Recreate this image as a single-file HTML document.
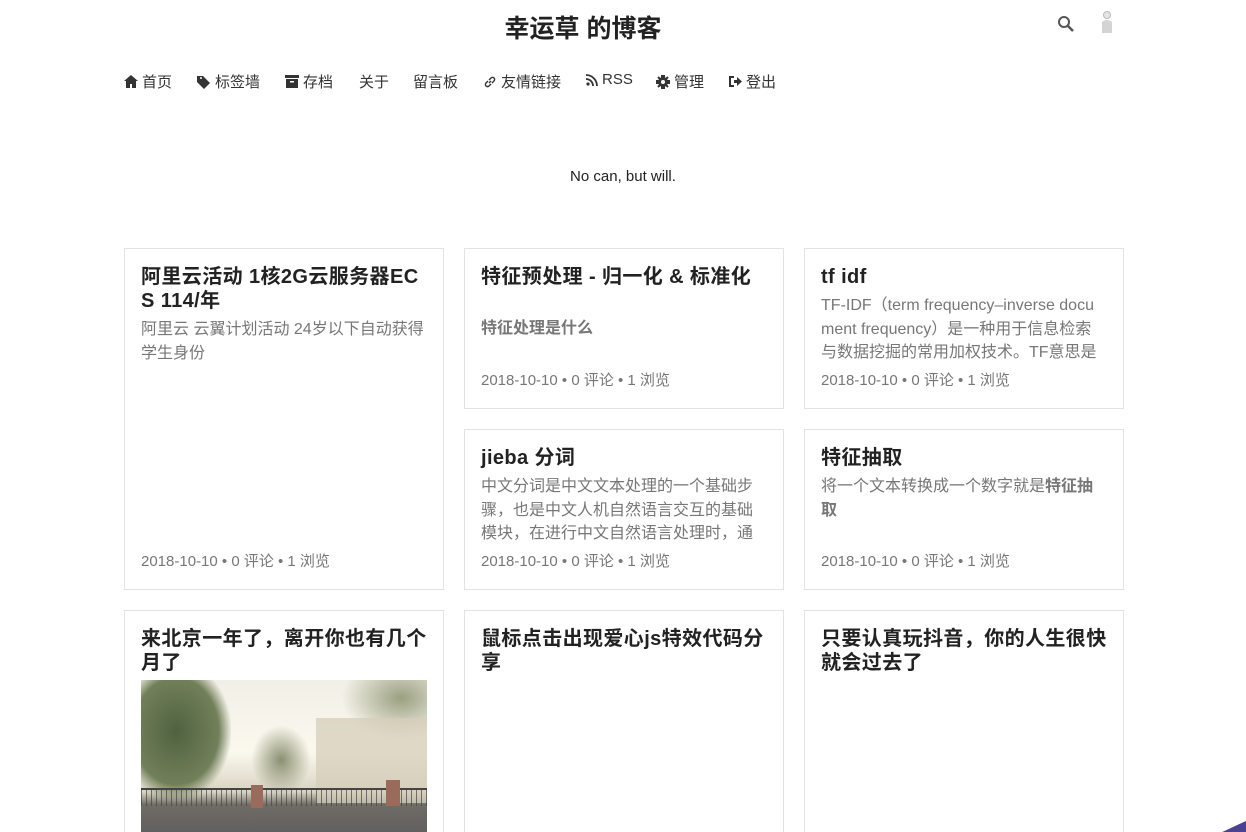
<!DOCTYPE html>
<html><head><meta charset="utf-8"><style>
*{margin:0;padding:0;box-sizing:border-box}
html,body{width:1246px;height:832px;overflow:hidden}
body{background:#fff;font-family:"Liberation Sans","Noto Sans CJK SC",sans-serif;color:#222;position:relative}
.brand{position:absolute;top:9px;left:0;width:1166px;text-align:center;font-size:25px;font-weight:bold;color:#222}
.nav span{position:absolute;top:71px;font-size:15px;color:#333;display:flex;align-items:center;gap:4px;white-space:nowrap}
.nav svg{fill:#333}
.motto{position:absolute;top:168px;width:1246px;text-align:center;font-size:15px;color:#222}
.card{position:absolute;border:1px solid #e3e3e3;background:#fff;padding:16px 16px;width:320px;overflow:hidden}
.card h2{font-size:20px;line-height:24px;font-weight:bold;color:#222;word-break:break-all;letter-spacing:.4px}
.card p{font-size:16px;line-height:23.5px;color:#777;margin-top:5px;word-break:break-all;letter-spacing:0}
.meta{position:absolute;left:16px;bottom:18px;font-size:15px;color:#777}
</style></head><body>
<div class="brand">幸运草 的博客</div>
<svg style="position:absolute;left:1057px;top:15px" width="18" height="18" viewBox="0 0 18 18"><circle cx="7" cy="7" r="5" stroke="#555" stroke-width="2" fill="none"/><path d="M11 11l5 5" stroke="#555" stroke-width="2.5"/></svg>
<svg style="position:absolute;left:1099px;top:10px" width="16" height="26" viewBox="0 0 16 26"><circle cx="8" cy="5" r="3.5" fill="#e4e4e4" stroke="#bbb"/><path d="M3 12q5-4 10 0v11H3z" fill="#d4d4d4"/></svg>
<div class="nav">
<span style="left:124px"><svg width="14" height="13" viewBox="0 0 14 13"><path d="M7 0L0 6h2v7h4V9h2v4h4V6h2z"/></svg>首页</span>
<span style="left:197px"><svg width="14" height="14" viewBox="0 0 14 14"><path d="M0 1v6l7 7 6-6-7-7zM3 3a1 1 0 1 1 0 .1z"/></svg>标签墙</span>
<span style="left:285px"><svg width="14" height="13" viewBox="0 0 14 13"><path d="M0 0h14v3H0zM1 4h12v9H1z"/><rect x="5" y="6" width="4" height="1.5" fill="#fff"/></svg>存档</span>
<span style="left:359px">关于</span>
<span style="left:413px">留言板</span>
<span style="left:483px"><svg width="14" height="14" viewBox="0 0 14 14"><path d="M6 8l2-2M5 6L3 8a2 2 0 0 0 3 3l2-2M9 8l2-2a2 2 0 0 0-3-3L6 5" stroke="#333" stroke-width="1.4" fill="none"/></svg>友情链接</span>
<span style="left:586px"><svg width="12" height="12" viewBox="0 0 12 12"><circle cx="2" cy="10" r="1.6"/><path d="M0 5a7 7 0 0 1 7 7M0 1a11 11 0 0 1 11 11" stroke="#333" stroke-width="1.8" fill="none"/></svg>RSS</span>
<span style="left:656px"><svg width="14" height="14" viewBox="0 0 14 14"><circle cx="7" cy="7" r="5"/><path d="M6 0h2v14H6zM0 6h14v2H0zM2 2l10 10M12 2L2 12" stroke="#333" stroke-width="2"/><circle cx="7" cy="7" r="2" fill="#fff"/></svg>管理</span>
<span style="left:729px"><svg width="13" height="13" viewBox="0 0 13 13"><path d="M0 1h5v2H2v7h3v2H0z"/><path d="M5 5h3V2l5 4.5L8 11V8H5z"/></svg>登出</span>
</div>
<div class="motto">No can, but will.</div>

<div class="card" style="left:124px;top:248px;height:342px"><h2>阿里云活动 1核2G云服务器EC S 114/年</h2><p>阿里云 云翼计划活动 24岁以下自动获得学生身份</p><div class="meta">2018-10-10 • 0 评论 • 1 浏览</div></div>
<div class="card" style="left:464px;top:248px;height:161px"><h2>特征预处理 - 归一化 &amp; 标准化</h2><p style="margin-top:28px;font-weight:bold">特征处理是什么</p><div class="meta">2018-10-10 • 0 评论 • 1 浏览</div></div>
<div class="card" style="left:804px;top:248px;height:161px"><h2>tf idf</h2><p style="height:70px;overflow:hidden">TF-IDF（term frequency–inverse document frequency）是一种用于信息检索与数据挖掘的常用加权技术。TF意思是词频</p><div class="meta">2018-10-10 • 0 评论 • 1 浏览</div></div>
<div class="card" style="left:464px;top:429px;height:161px"><h2>jieba 分词</h2><p style="height:70px;overflow:hidden">中文分词是中文文本处理的一个基础步骤，也是中文人机自然语言交互的基础模块，在进行中文自然语言处理时，通常</p><div class="meta">2018-10-10 • 0 评论 • 1 浏览</div></div>
<div class="card" style="left:804px;top:429px;height:161px"><h2>特征抽取</h2><p>将一个文本转换成一个数字就是<b>特征抽取</b></p><div class="meta">2018-10-10 • 0 评论 • 1 浏览</div></div>
<div class="card" style="left:124px;top:610px;height:240px"><h2>来北京一年了，离开你也有几个月了</h2>
<div style="margin-top:5px;width:286px;height:160px;position:relative;background:linear-gradient(180deg,#f2efe6 0%,#fbf8ee 45%,#d8d3c2 70%,#6f6c66 78%,#5e5d5c 100%);overflow:hidden">
<div style="position:absolute;left:-10px;top:-5px;width:100px;height:125px;background:radial-gradient(ellipse at 45% 45%,#4f6240 0%,#72805a 55%,transparent 72%)"></div>
<div style="position:absolute;left:110px;top:45px;width:60px;height:70px;background:radial-gradient(ellipse,#8a9070 0%,transparent 70%)"></div>
<div style="position:absolute;left:200px;top:0;width:86px;height:60px;background:radial-gradient(ellipse at 70% 30%,#9aa080 0%,transparent 70%)"></div>
<div style="position:absolute;left:175px;top:38px;width:111px;height:85px;background:#d6cdb9;opacity:.75"></div>
<div style="position:absolute;left:0;top:108px;width:286px;height:2px;background:#444"></div>
<div style="position:absolute;left:0;top:108px;width:286px;height:18px;background:repeating-linear-gradient(90deg,#444 0 1px,transparent 1px 5px);opacity:.7"></div>
<div style="position:absolute;left:110px;top:105px;width:12px;height:23px;background:#9a6a5a"></div>
<div style="position:absolute;left:245px;top:100px;width:14px;height:26px;background:#9a6a5a"></div>
</div></div>
<div class="card" style="left:464px;top:610px;height:240px"><h2>鼠标点击出现爱心js特效代码分享</h2></div>
<div class="card" style="left:804px;top:610px;height:240px"><h2>只要认真玩抖音，你的人生很快就会过去了</h2></div>
<div style="position:absolute;left:1222px;top:822px;width:50px;height:30px;background:#4a4290;transform:rotate(-25deg)"></div>
</body></html>
